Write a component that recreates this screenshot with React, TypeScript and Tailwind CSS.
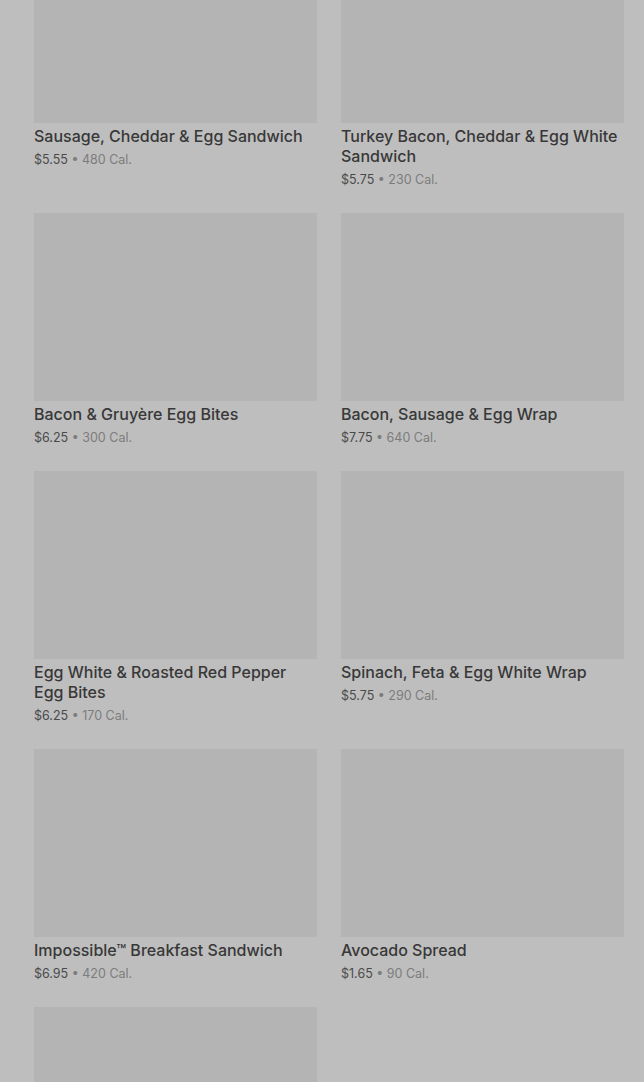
import React from "react";

type Item = { name: string; price: string; cal: string };

const items: Item[] = [
  { name: "Sausage, Cheddar & Egg Sandwich", price: "$5.55", cal: "480 Cal." },
  { name: "Turkey Bacon, Cheddar & Egg White Sandwich", price: "$5.75", cal: "230 Cal." },
  { name: "Bacon & Gruyère Egg Bites", price: "$6.25", cal: "300 Cal." },
  { name: "Bacon, Sausage & Egg Wrap", price: "$7.75", cal: "640 Cal." },
  { name: "Egg White & Roasted Red Pepper Egg Bites", price: "$6.25", cal: "170 Cal." },
  { name: "Spinach, Feta & Egg White Wrap", price: "$5.75", cal: "290 Cal." },
  { name: "Impossible™ Breakfast Sandwich", price: "$6.95", cal: "420 Cal." },
  { name: "Avocado Spread", price: "$1.65", cal: "90 Cal." },
];

export default function App() {
  return (
    <div
      className="w-[644px] h-[1082px] overflow-hidden bg-[#bebebe]"
      style={{ fontFamily: "Inter, 'Noto Sans', sans-serif" }}
    >
      <div className="grid grid-cols-2 gap-x-6 gap-y-6 pl-[34px] pr-[20px] -mt-[65px]">
        {items.map((it) => (
          <div key={it.name} className="flex flex-col">
            <div className="h-[188px] bg-[#b4b4b4]" />
            <div className="pt-[3px]">
              <div className="text-[16px] leading-5 font-medium text-[#383838] pr-[2px]">
                {it.name}
              </div>
              <div className="mt-[4px] text-[12.5px] leading-[19px] text-[#4a4a4a]">
                <span>{it.price}</span>
                <span className="text-[#7c7c7c]"> • {it.cal}</span>
              </div>
            </div>
          </div>
        ))}
        <div className="flex flex-col">
          <div className="h-[188px] bg-[#b4b4b4]" />
        </div>
      </div>
    </div>
  );
}
